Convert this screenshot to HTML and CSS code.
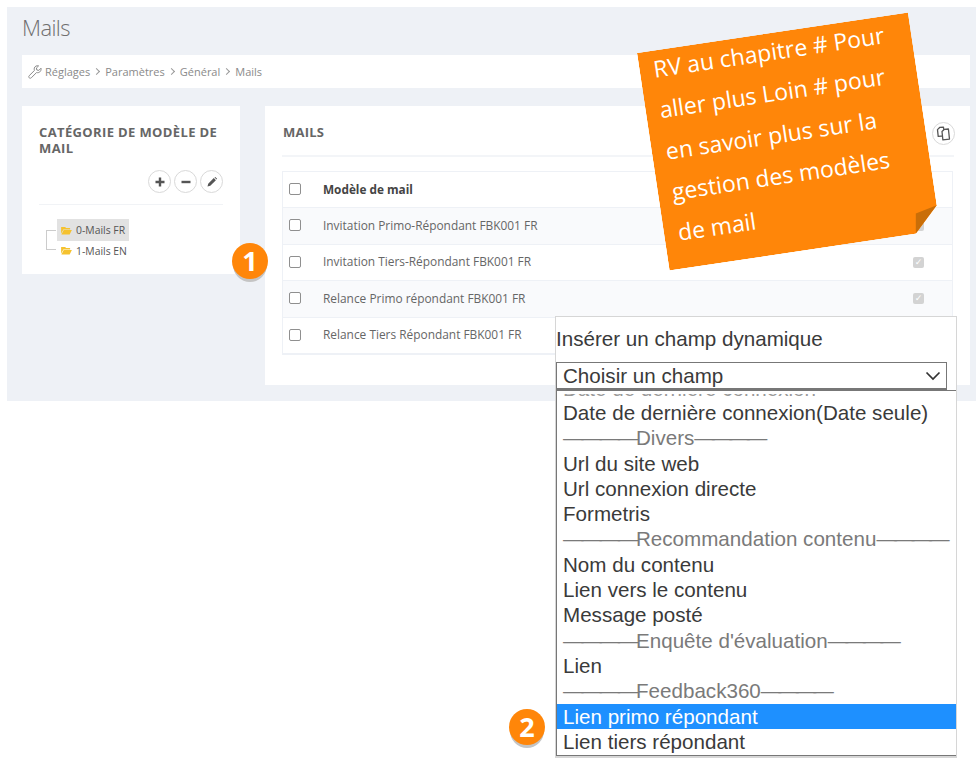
FILE: index.html
```html
<!DOCTYPE html>
<html lang="fr">
<head>
<meta charset="utf-8">
<title>Mails</title>
<link rel="stylesheet" href="styles.css">
</head>
<body>
<main class="page">
  <h1 class="title">Mails</h1>
  <nav class="crumbs">
    <svg class="wrench" viewBox="0 0 14 14" width="14" height="14"><path d="M13 3.200 10.800 5.400 8.800 5 8.400 3 10.600.9C8.700.3 6.800 1.300 6.300 3.100 6.100 3.900 6.200 4.700 6.500 5.400L1.200 10.700C.6 11.300.6 12.200 1.200 12.800 1.800 13.400 2.700 13.400 3.300 12.800L8.600 7.500C10.700 8.300 13.600 6.500 13 3.200Z" fill="none" stroke="#8a8a8a" stroke-width="1"/></svg>
    <span>Réglages</span><i class="sep"></i><span>Paramètres</span><i class="sep"></i><span>Général</span><i class="sep"></i><span>Mails</span>
  </nav>
  <div class="columns">
    <section class="card side">
      <h2 class="card-title">Catégorie de modèle de mail</h2>
      <div class="tools">
        <span class="round"><svg viewBox="0 0 12 12" width="12" height="12"><path d="M6 1.500V10.500M1.500 6H10.500" stroke="#555" stroke-width="2.400"/></svg></span>
        <span class="round"><svg viewBox="0 0 12 12" width="12" height="12"><path d="M1.500 6H10.500" stroke="#555" stroke-width="2.400"/></svg></span>
        <span class="round"><svg viewBox="0 0 12 12" width="12" height="12"><path d="M1.500 10.500 2.200 7.700 7.800 2.100 9.900 4.200 4.300 9.800ZM8.500 1.400 9.300.9 11.100 2.700 10.600 3.500Z" fill="#555"/></svg></span>
      </div>
      <div class="tree">
        <div class="tree-lines"></div>
        <div class="node selected"><svg class="folder" viewBox="0 0 12 10" width="11" height="9"><path d="M0 1H4.500L5.500 2.200H10V3.800H2.500L0 8.500Z M2.900 4.500H12L9.500 9.500H0.300Z" fill="#f5c22f"/></svg>0-Mails FR</div>
        <div class="node"><svg class="folder" viewBox="0 0 12 10" width="11" height="9"><path d="M0 1H4.500L5.500 2.200H10V3.800H2.500L0 8.500Z M2.900 4.500H12L9.500 9.500H0.300Z" fill="#f5c22f"/></svg>1-Mails EN</div>
      </div>
    </section>
    <section class="card content">
      <div class="content-head">
        <h2 class="card-title">Mails</h2>
        <span class="round"><svg viewBox="0 0 14 14" width="15" height="15"><g transform="rotate(-6 7 7)" fill="#fff" stroke="#555" stroke-width="1.200" stroke-linejoin="round"><path d="M1.800 2.800 4 1H7.600V9.200H1.800Z"/><path d="M5.800 5 8 3.300H12V12.800H5.800Z"/></g></svg></span>
      </div>
      <div class="table">
        <div class="row head"><span class="box"></span><span class="name">Modèle de mail</span></div>
        <div class="row alt"><span class="box"></span><span class="name">Invitation Primo-Répondant FBK001 FR</span><span class="on">✓</span></div>
        <div class="row"><span class="box"></span><span class="name">Invitation Tiers-Répondant FBK001 FR</span><span class="on">✓</span></div>
        <div class="row alt"><span class="box"></span><span class="name">Relance Primo répondant FBK001 FR</span><span class="on">✓</span></div>
        <div class="row"><span class="box"></span><span class="name">Relance Tiers Répondant FBK001 FR</span></div>
      </div>
    </section>
  </div>
</main>

<aside class="note">
  <div class="note-fold"></div>
  <p class="note-text">RV au chapitre # Pour<br>aller plus Loin # pour<br>en savoir plus sur la<br>gestion des modèles<br>de mail</p>
</aside>

<span class="badge badge-one">1</span>
<span class="badge badge-two">2</span>

<div class="picker">
  <div class="picker-label">Insérer un champ dynamique</div>
  <div class="select">Choisir un champ<svg viewBox="0 0 16 10" width="16" height="10"><path d="M1.500 1.500 8 8 14.500 1.500" fill="none" stroke="#333" stroke-width="1.700"/></svg></div>
  <div class="list">
    <div class="opt clipped"><span class="clip-window"><span class="clip-text">Date de dernière connexion</span></span></div>
    <div class="opt">Date de dernière connexion(Date seule)</div>
    <div class="opt group"><span class="dash">————</span>Divers<span class="dash">————</span></div>
    <div class="opt">Url du site web</div>
    <div class="opt">Url connexion directe</div>
    <div class="opt">Formetris</div>
    <div class="opt group"><span class="dash">————</span>Recommandation contenu<span class="dash">————</span></div>
    <div class="opt">Nom du contenu</div>
    <div class="opt">Lien vers le contenu</div>
    <div class="opt">Message posté</div>
    <div class="opt group"><span class="dash">————</span>Enquête d'évaluation<span class="dash">————</span></div>
    <div class="opt">Lien</div>
    <div class="opt group"><span class="dash">————</span>Feedback360<span class="dash">————</span></div>
    <div class="opt active">Lien primo répondant</div>
    <div class="opt">Lien tiers répondant</div>
  </div>
</div>
</body>
</html>
```
FILE: styles.css
```css
* { box-sizing: border-box; }
html, body { margin: 0; height: 783px; overflow: hidden; background: #fff; }
body { font-family: "Open Sans", sans-serif; color: #666; position: relative; }

.page {
  margin: 7px 0 0 7px;
  height: 394px;
  background: #eef1f6;
  padding: 8px 6px 0 15px;
}
.title { margin: 0; font-size: 22px; font-weight: 300; line-height: 24px; color: #6f6f6f; letter-spacing: -.6px; }
.crumbs {
  margin-top: 16px;
  height: 33px;
  background: #fff;
  display: flex;
  align-items: center;
  padding-left: 6px;
  font-size: 11px;
  color: #8a8a8a;
}
.wrench { margin-right: 3px; }
.sep {
  width: 5px; height: 5px; margin: 0 6px 0 4px;
  border-top: 1px solid #999; border-right: 1px solid #999;
  transform: rotate(45deg);
}
.columns { display: flex; gap: 25px; margin-top: 18px; align-items: flex-start; }
.card { background: #fff; }
.side { width: 218px; height: 168px; padding: 18px 17px 0; }
.side .card-title { letter-spacing: .37px; }
.content { width: 705px; height: 279px; padding: 0 17px; }
.card-title {
  margin: 0;
  font-size: 13px;
  line-height: 16px;
  font-weight: 700;
  text-transform: uppercase;
  color: #666;
  letter-spacing: .2px;
}
.tools {
  margin-top: 14px;
  padding-bottom: 11px;
  border-bottom: 1px solid #f1f3f6;
  display: flex;
  justify-content: flex-end;
  gap: 3px;
}
.round {
  width: 23px; height: 23px;
  border: 1px solid #d9d9d9;
  border-radius: 50%;
  display: flex; align-items: center; justify-content: center;
  background: #fff;
}
.tree { position: relative; margin-top: 14px; padding-left: 18px; font-size: 10.400px; color: #555; }
.tree-lines {
  position: absolute; left: 7px; top: 11px; width: 10px; height: 20px;
  border: 1px solid #ccc; border-right: 0;
}
.node { height: 22px; display: inline-flex; align-items: center; padding: 0 4px; width: 72px; white-space: nowrap; }
.node + .node { display: flex; height: 19px; }
.node.selected { background: #e2e2e2; }
.folder { margin-right: 4px; flex: none; }
.content-head {
  height: 51px;
  margin-right: -1px;
  padding: 18px 0 0 1px;
  border-bottom: 2px solid #f3f5f8;
  display: flex;
  justify-content: space-between;
  align-items: flex-start;
}
.content-head .round { margin-top: -2px; margin-right: -1px; }
.table { margin-top: 14px; width: 671px; border: 1px solid #eef1f6; border-bottom-width: 2px; }
.row {
  height: 36.500px;
  display: flex;
  align-items: center;
  padding-left: 6px;
  border-top: 1px solid #eef1f6;
  font-size: 11.900px;
  color: #666;
}
.row:first-child { border-top: 0; height: 35px; }
.row.alt { background: #f9fafc; }
.row.head { font-weight: 700; color: #444; font-size: 11.800px; }
.box {
  width: 12px; height: 12px;
  border: 1px solid #8f8f8f;
  border-radius: 2px;
  background: #fff;
  flex: none;
  margin-top: -1px;
}
.name { margin-left: 22px; flex: 1; margin-top: -2px; }
.on {
  width: 11px; height: 11px;
  margin-right: 28px;
  background: #d3d3d3;
  border-radius: 2px;
  color: #fff;
  font-size: 9px;
  line-height: 11px;
  text-align: center;
  font-family: "DejaVu Sans", sans-serif;
}

.note {
  position: absolute; left: 637px; top: 53px;
  width: 274px; height: 220px;
  transform-origin: 0 0;
  transform: rotate(-8.500deg);
  background: #ff8609;
  clip-path: polygon(0 0, 100% 0, 100% 195px, 249px 100%, 0 100%);
}
.note-fold {
  position: absolute; inset: 0;
  background: #c96e08;
  clip-path: polygon(274px 195px, 252px 200px, 249px 220px);
}
.note-text {
  margin: -2px 0 0;
  padding: 0 0 0 14px;
  color: #fff;
  font-size: 23px;
  line-height: 41.300px;
  white-space: nowrap;
}

.badge {
  position: absolute;
  width: 36px; height: 36px;
  border-radius: 50%;
  background: #ff8609;
  color: #fff;
  font-weight: 700;
  font-size: 27px;
  line-height: 36px;
  text-align: center;
  box-shadow: 0 4px 0 -1px #c4c4c4;
  z-index: 3;
}
.badge-one { left: 232px; top: 243px; }
.badge-two { left: 509px; top: 709px; }

.picker {
  position: absolute; left: 555px; top: 316px;
  width: 402px; height: 442px;
  background: #fff;
  border: 1px solid #d6d6d6;
  border-bottom-width: 2px;
  font-family: "Liberation Sans", sans-serif;
  font-size: 20.600px;
  color: #3a3a3a;
  z-index: 2;
}
.picker-label { margin-top: 7px; height: 38px; line-height: 29px; }
.select {
  width: 391px; height: 28px;
  border: 1px solid #777;
  border-bottom-width: 2px;
  padding-left: 6px;
  line-height: 27px;
  display: flex; justify-content: space-between; align-items: center;
}
.select svg { margin-right: 5px; }
.list {
  border-left: 1px solid #777;
  border-top: 1px solid #777;
  border-bottom: 1px solid #777;
  height: 366px;
  overflow: hidden;
}
.opt { height: 25.300px; line-height: 25.300px; padding-left: 6px; white-space: nowrap; }
.opt.clipped { height: 9px; padding-top: 3px; color: #999; }
.clip-window { display: block; height: 3px; overflow: hidden; }
.clip-text { display: block; line-height: 20px; margin-top: -15px; }
.opt.group { color: #7a7a7a; }
.dash { letter-spacing: -2.350px; }
.dash:last-child { letter-spacing: -3.100px; }
.opt.active { background: #1e90ff; color: #fff; }
```
